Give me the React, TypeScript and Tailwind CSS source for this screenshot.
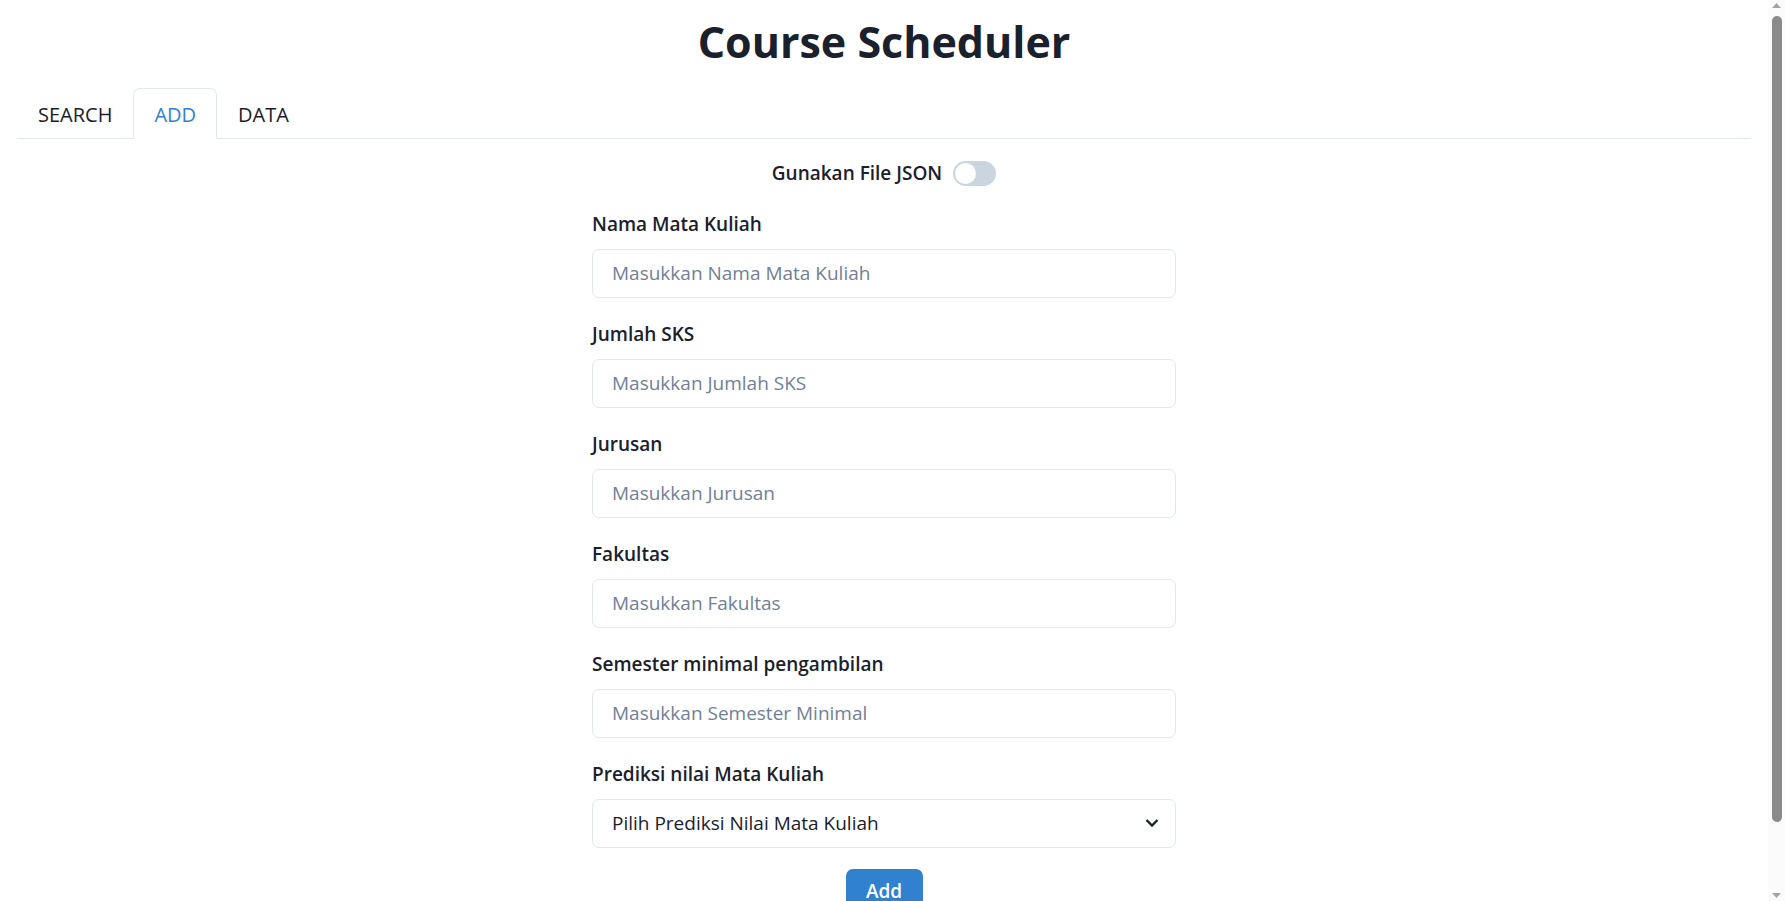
const FIELDS = [
  { label: 'Nama Mata Kuliah', placeholder: 'Masukkan Nama Mata Kuliah' },
  { label: 'Jumlah SKS', placeholder: 'Masukkan Jumlah SKS' },
  { label: 'Jurusan', placeholder: 'Masukkan Jurusan' },
  { label: 'Fakultas', placeholder: 'Masukkan Fakultas' },
  { label: 'Semester minimal pengambilan', placeholder: 'Masukkan Semester Minimal' },
]

const TABS = ['SEARCH', 'ADD', 'DATA']

function Scrollbar() {
  return (
    <div className="w-[17px] h-screen shrink-0 bg-[#fbfbfb] flex flex-col items-center">
      <svg className="mt-[3px] shrink-0" width="9" height="5" viewBox="0 0 9 5">
        <path d="M0 5 L4.5 0 L9 5 Z" fill="#a3a3a3" />
      </svg>
      <div className="mt-[8px] w-[10px] h-[806px] rounded-full bg-[#8a8a8a]" />
      <div className="flex-1" />
      <svg className="mb-[3px] shrink-0" width="9" height="5" viewBox="0 0 9 5">
        <path d="M0 0 L4.5 5 L9 0 Z" fill="#a3a3a3" />
      </svg>
    </div>
  )
}

export default function App() {
  return (
    <div className="flex h-screen overflow-hidden bg-white text-[#1a202c] font-['Open_Sans',sans-serif]">
      <main className="flex-1 min-w-0 h-screen overflow-hidden">
        <h1 className="pt-[16px] text-center text-[43px] font-bold leading-[1.2]">Course Scheduler</h1>

        <div className="mt-[20px] px-[17px]">
          <div className="flex border-b border-[#e2e8f0]">
            {TABS.map((tab) => {
              const active = tab === 'ADD'
              return (
                <button
                  key={tab}
                  className={
                    active
                      ? 'h-[51px] -mb-px px-[20px] pt-[3px] border border-[#e2e8f0] border-b-white rounded-t-[7px] bg-white text-[20px] text-[#3182ce]'
                      : 'h-[51px] -mb-px px-[20px] pt-[3px] border border-transparent text-[20px] text-[#1a202c]'
                  }
                >
                  {tab}
                </button>
              )
            })}
          </div>

          <div className="pt-[22px]">
            <div className="flex items-center justify-center gap-[11px] h-[25px]">
              <span className="text-[19px] font-semibold">Gunakan File JSON</span>
              <span className="flex items-center w-[43px] h-[25px] rounded-full bg-[#cbd5e0] px-[2px]">
                <span className="w-[21px] h-[21px] rounded-full bg-white" />
              </span>
            </div>

            <form className="mx-auto mt-[23px] w-full max-w-[584px] flex flex-col gap-[21px]">
              {FIELDS.map((f) => (
                <div key={f.label} className="flex flex-col">
                  <label className="mb-[10px] text-[19px] leading-[30px] font-semibold">{f.label}</label>
                  <input
                    placeholder={f.placeholder}
                    className="h-[49px] rounded-[7px] border border-[#e2e8f0] px-[19px] text-[19px] outline-none placeholder:text-[#718096]"
                  />
                </div>
              ))}

              <div className="flex flex-col">
                <label className="mb-[10px] text-[19px] leading-[30px] font-semibold">Prediksi nilai Mata Kuliah</label>
                <div className="relative">
                  <select className="w-full h-[49px] appearance-none rounded-[7px] border border-[#e2e8f0] bg-white pl-[19px] pr-[48px] text-[19px] text-[#1a202c] outline-none">
                    <option>Pilih Prediksi Nilai Mata Kuliah</option>
                    <option>A</option>
                    <option>AB</option>
                    <option>B</option>
                    <option>BC</option>
                    <option>C</option>
                  </select>
                  <svg
                    className="pointer-events-none absolute right-[17px] top-1/2 -translate-y-1/2"
                    width="14"
                    height="9"
                    viewBox="0 0 14 9"
                    fill="none"
                  >
                    <path d="M1.5 1.5 L7 7 L12.5 1.5" stroke="#1a202c" strokeWidth="2.4" />
                  </svg>
                </div>
              </div>

              <div className="flex justify-center">
                <button
                  type="button"
                  className="h-[46px] w-[77px] rounded-[7px] bg-[#3182ce] text-[19px] font-semibold text-white"
                >
                  Add
                </button>
              </div>
            </form>
          </div>
        </div>
      </main>
      <Scrollbar />
    </div>
  )
}
